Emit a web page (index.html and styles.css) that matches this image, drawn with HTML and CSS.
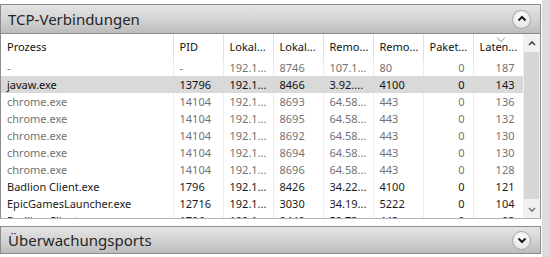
FILE: index.html
```html
<!DOCTYPE html>
<html lang="de">
  <head>
    <meta charset="UTF-8" />
    <title>TCP-Verbindungen</title>
    <link rel="stylesheet" href="styles.css">
  </head>
  <body>
    <div class="window">
      <div class="main">
        <section class="panel">
          <div class="panel-header">
            <span class="panel-title">TCP-Verbindungen</span>
            <span class="toggle">
              <svg viewBox="0 0 10 10" width="10" height="10"><path d="M1.5 6.5 L5 3 L8.5 6.5" fill="none" stroke="#1a1a1a" stroke-width="2"/></svg>
            </span>
          </div>
          <div class="grid-wrap">
            <div class="grid-scroll">
              <table class="grid">
                <colgroup>
                  <col class="c-proc" />
                  <col /><col /><col /><col /><col /><col /><col />
                </colgroup>
                <thead>
                  <tr>
                    <th>Prozess</th>
                    <th>PID</th>
                    <th>Lokal...</th>
                    <th>Lokal...</th>
                    <th>Remo...</th>
                    <th>Remo...</th>
                    <th class="num">Paket...</th>
                    <th class="num sorted">Laten...</th>
                  </tr>
                </thead>
                <tbody>
                  <tr class="dim">
                    <td>-</td><td>-</td><td>192.1...</td><td>8746</td><td>107.1...</td><td>80</td><td class="num">0</td><td class="num">187</td>
                  </tr>
                  <tr class="selected">
                    <td>javaw.exe</td><td>13796</td><td>192.1...</td><td>8466</td><td>3.92....</td><td>4100</td><td class="num">0</td><td class="num">143</td>
                  </tr>
                  <tr class="dim">
                    <td>chrome.exe</td><td>14104</td><td>192.1...</td><td>8693</td><td>64.58...</td><td>443</td><td class="num">0</td><td class="num">136</td>
                  </tr>
                  <tr class="dim">
                    <td>chrome.exe</td><td>14104</td><td>192.1...</td><td>8695</td><td>64.58...</td><td>443</td><td class="num">0</td><td class="num">132</td>
                  </tr>
                  <tr class="dim">
                    <td>chrome.exe</td><td>14104</td><td>192.1...</td><td>8692</td><td>64.58...</td><td>443</td><td class="num">0</td><td class="num">130</td>
                  </tr>
                  <tr class="dim">
                    <td>chrome.exe</td><td>14104</td><td>192.1...</td><td>8694</td><td>64.58...</td><td>443</td><td class="num">0</td><td class="num">130</td>
                  </tr>
                  <tr class="dim">
                    <td>chrome.exe</td><td>14104</td><td>192.1...</td><td>8696</td><td>64.58...</td><td>443</td><td class="num">0</td><td class="num">128</td>
                  </tr>
                  <tr>
                    <td>Badlion Client.exe</td><td>1796</td><td>192.1...</td><td>8426</td><td>34.22...</td><td>4100</td><td class="num">0</td><td class="num">121</td>
                  </tr>
                  <tr>
                    <td>EpicGamesLauncher.exe</td><td>12716</td><td>192.1...</td><td>3030</td><td>34.19...</td><td>5222</td><td class="num">0</td><td class="num">104</td>
                  </tr>
                  <tr>
                    <td>Badlion Client.exe</td><td>1796</td><td>192.1...</td><td>8440</td><td>52.73...</td><td>443</td><td class="num">0</td><td class="num">93</td>
                  </tr>
                </tbody>
              </table>
            </div>
            <div class="scrollbar">
              <span class="arrow">
                <svg viewBox="0 0 8 6" width="8" height="6"><path d="M1 5 L4 2 L7 5" fill="none" stroke="#444" stroke-width="1.6"/></svg>
              </span>
              <span class="track"><span class="thumb"></span></span>
              <span class="arrow">
                <svg viewBox="0 0 8 6" width="8" height="6"><path d="M1 1 L4 4 L7 1" fill="none" stroke="#777" stroke-width="1.6"/></svg>
              </span>
            </div>
          </div>
        </section>
        <section class="panel collapsed">
          <div class="panel-header">
            <span class="panel-title">Überwachungsports</span>
            <span class="toggle">
              <svg viewBox="0 0 10 10" width="10" height="10"><path d="M1.5 3.5 L5 7 L8.5 3.5" fill="none" stroke="#1a1a1a" stroke-width="2"/></svg>
            </span>
          </div>
        </section>
      </div>
      <div class="side"></div>
    </div>
  </body>
</html>
```

FILE: styles.css
```css
:root {
  --border: #8c8c8c;
  --text: #1a1a1a;
  --text-dim: #737373;
  --line: #ececec;
  --selected: #d9d9d9;
}

* {
  margin: 0;
  padding: 0;
  box-sizing: border-box;
}

body {
  font-family: "Noto Sans", "Open Sans", sans-serif;
  font-size: 11px;
  color: var(--text);
  background-color: #ffffff;
  width: 549px;
  height: 257px;
  overflow: hidden;
}

.window {
  display: flex;
  height: 257px;
}

.main {
  width: 541px;
  padding-top: 4px;
  display: flex;
  flex-direction: column;
}

.side {
  width: 7px;
  margin-left: 1px;
  background-color: #dcdcdc;
}

.panel-header {
  height: 30px;
  display: flex;
  align-items: center;
  justify-content: space-between;
  padding: 0 9px 0 7px;
  border: 1px solid var(--border);
  background: linear-gradient(#e4e4e4, #d2d2d2 55%, #bcbcbc);
}

.panel-title {
  font-size: 15px;
  color: #262626;
}

.toggle {
  width: 19px;
  height: 19px;
  border-radius: 50%;
  border: 1px solid #a8a8a8;
  background: radial-gradient(circle at 50% 35%, #ffffff, #e8e8e8 70%, #d2d2d2);
  display: flex;
  align-items: center;
  justify-content: center;
}

.grid-wrap {
  display: flex;
  height: 185px;
  border-left: 1px solid var(--border);
  border-right: 1px solid var(--border);
  border-bottom: 1px solid #b4b4b4;
}

.grid-scroll {
  width: 522px;
  overflow: hidden;
}

.grid {
  width: 522px;
  table-layout: fixed;
  border-collapse: collapse;
}

.grid col {
  width: 50px;
}

.grid col.c-proc {
  width: 172px;
}

.grid th,
.grid td {
  white-space: nowrap;
  overflow: hidden;
  text-align: left;
  padding: 0 6px;
  border-right: 1px solid var(--line);
}

.grid th {
  height: 25px;
  font-weight: 400;
  color: #111;
  border-right-color: #e0e0e0;
  position: relative;
}

.grid td {
  height: 17px;
}

.grid .num {
  text-align: right;
  padding-right: 8px;
}

.grid th.sorted::before {
  content: "";
  position: absolute;
  top: 1px;
  left: 24px;
  width: 5px;
  height: 5px;
  border-right: 1px solid #aaa;
  border-bottom: 1px solid #aaa;
  transform: rotate(45deg);
}

.grid tr.dim td {
  color: var(--text-dim);
}

.grid tr.selected td {
  background-color: var(--selected);
  color: #111;
  border-right-color: var(--selected);
}

.scrollbar {
  width: 17px;
  display: flex;
  flex-direction: column;
  background-color: #f0f0f0;
}

.arrow {
  height: 17px;
  display: flex;
  align-items: center;
  justify-content: center;
}

.track {
  flex: 1;
  padding: 1px 1px;
  display: flex;
}

.thumb {
  flex: 1;
  margin-bottom: 1px;
  background-color: #d6d6d6;
}

.collapsed {
  margin-top: 7px;
}

.collapsed .panel-header {
  height: 28px;
}
```
